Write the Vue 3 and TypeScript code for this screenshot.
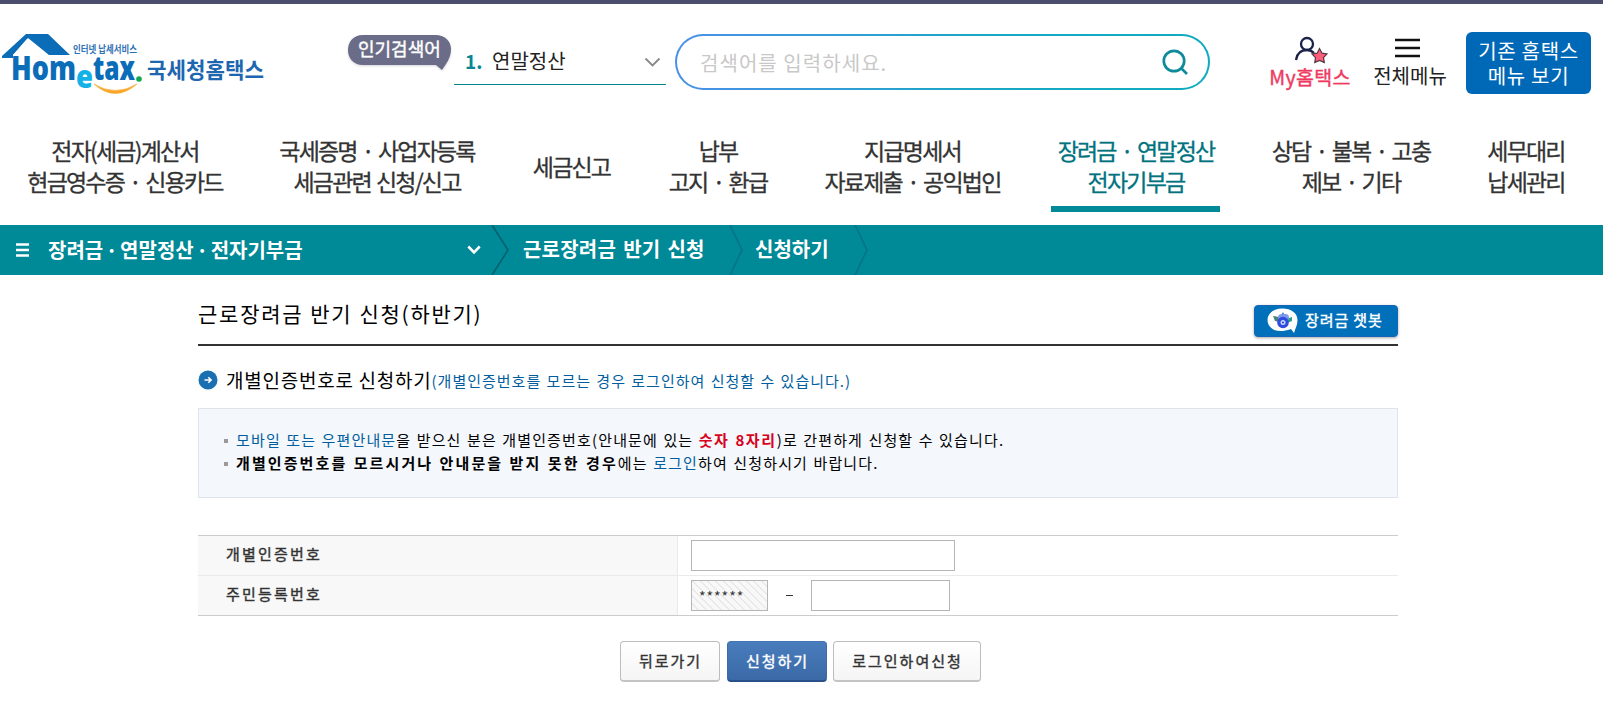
<script setup lang="ts">
import { ref } from 'vue'

interface MenuItem {
  lines: string[]
  active?: boolean
}

const menu: MenuItem[] = [
  { lines: ['전자(세금)계산서', '현금영수증 · 신용카드'] },
  { lines: ['국세증명 · 사업자등록', '세금관련 신청/신고'] },
  { lines: ['세금신고'] },
  { lines: ['납부', '고지 · 환급'] },
  { lines: ['지급명세서', '자료제출 · 공익법인'] },
  { lines: ['장려금 · 연말정산', '전자기부금'], active: true },
  { lines: ['상담 · 불복 · 고충', '제보 · 기타'] },
  { lines: ['세무대리', '납세관리'] },
]

const query = ref('')
const certNo = ref('')
const residentFront = ref('******')
const residentBack = ref('')
</script>

<template>
  <div class="page">
    <header class="header">
      <svg class="logo" width="270" height="66" viewBox="0 0 270 66">
        <path d="M26 1H48L70 22H49L28 5L13 22V25H2V23Z" fill="#0b6cb8" />
        <path d="M27 6L46 22H13Z" fill="#fff" />
        <text class="logo-small" x="73" y="20" textLength="64" lengthAdjust="spacingAndGlyphs">인터넷 납세서비스</text>
        <text class="logo-word" x="11" y="47" textLength="65" lengthAdjust="spacingAndGlyphs">Hom</text>
        <text class="logo-e" x="76" y="55" textLength="17" lengthAdjust="spacingAndGlyphs">e</text>
        <text class="logo-word" x="93" y="47" textLength="42" lengthAdjust="spacingAndGlyphs">tax</text>
        <circle cx="139" cy="46" r="2.8" fill="#12a84c" />
        <path d="M94 51Q115 70 137 51Q115 64 94 51Z" fill="#f9a72b" stroke="#f9a72b" stroke-width=".6" />
        <text class="logo-ko" x="147" y="45" textLength="117" lengthAdjust="spacingAndGlyphs">국세청홈택스</text>
      </svg>

      <div class="hot">
        <svg class="hot-shape" width="106" height="38" viewBox="0 0 106 38">
          <path d="M16 1H88C99 1 104 8 104 15C104 24 99 30 95 36L89 31H16C6 31 1 24 1 16S6 1 16 1Z" fill="#6b6d88" />
        </svg>
        <span class="hot-text">인기검색어</span>
      </div>

      <div class="keyword">
        <b>1.</b><span>연말정산</span>
        <svg width="17" height="11" viewBox="0 0 17 11"><path d="M1.5 1.5L8.5 8.5L15.5 1.5" fill="none" stroke="#888" stroke-width="1.8" /></svg>
      </div>

      <div class="search">
        <input v-model="query" placeholder="검색어를 입력하세요." />
        <svg width="26" height="27" viewBox="0 0 26 27" fill="none" stroke="#0e8b9a" stroke-width="2.7">
          <circle cx="12" cy="12" r="10.2" /><path d="M19 19L25 25" />
        </svg>
      </div>

      <a class="my">
        <svg width="34" height="28" viewBox="0 0 34 28">
          <g fill="none" stroke="#1b2147" stroke-width="2.3">
            <circle cx="13" cy="8" r="6" /><path d="M2 24C3 17 7 14 13 14C16 14 18 15 20 17" />
          </g>
          <path d="M25.5 12.5L28 17.2L33 18L29.5 21.7L30.3 26.5L25.5 24.5L20.8 26.5L21.5 21.7L18 18L23.2 17.2Z" fill="#ff5d7c" stroke="#543743" stroke-width="1.2" />
        </svg>
        <span>My홈택스</span>
      </a>
      <a class="all">
        <svg width="25" height="20" viewBox="0 0 25 20"><path d="M0 2H25M0 10H25M0 18H25" stroke="#111" stroke-width="2.6" /></svg>
        <span>전체메뉴</span>
      </a>
      <a class="old"><span>기존 홈택스</span><span>메뉴 보기</span></a>
    </header>

    <nav class="menu">
      <a v-for="item in menu" :key="item.lines[0]" :class="{ active: item.active }">
        <span v-for="line in item.lines" :key="line">{{ line }}</span>
      </a>
    </nav>

    <div class="crumbs">
      <svg class="bars" width="13" height="14" viewBox="0 0 13 14"><path d="M0 1.5H13M0 7H13M0 12.5H13" stroke="#fff" stroke-width="2.4" /></svg>
      <span class="crumb first">장려금 · 연말정산 · 전자기부금</span>
      <svg class="down" width="14" height="10" viewBox="0 0 14 10"><path d="M1.3 1.5L7 7.3L12.7 1.5" fill="none" stroke="#fff" stroke-width="2.6" /></svg>
      <svg class="sep dark" width="18" height="50" viewBox="0 0 18 50"><path d="M1 0L17 25L1 50" /></svg>
      <span class="crumb second">근로장려금 반기 신청</span>
      <svg class="sep" width="14" height="50" viewBox="0 0 14 50"><path d="M1 0L13 25L1 50" /></svg>
      <span class="crumb third">신청하기</span>
      <svg class="sep" width="14" height="50" viewBox="0 0 14 50"><path d="M1 0L13 25L1 50" /></svg>
    </div>

    <main class="content">
      <div class="title-row">
        <h1>근로장려금 반기 신청(하반기)</h1>
        <button class="chat">
          <svg width="32" height="26" viewBox="0 0 32 26">
            <path d="M15.500 .5C24 .5 30.500 5 30.500 12C30.500 17 28.500 20 27 25L24 21C8 27 .5 19 .5 12C.5 5 7 .5 15.500 .5Z" fill="#fff" />
            <path d="M6 8L12 9V14L8 13Z" fill="#4a8174" /><path d="M25 9L19 11L20 15L25 13Z" fill="#23a384" />
            <rect x="11" y="6" width="11" height="7" rx="3.500" fill="#7d9bea" />
            <circle cx="16" cy="14.500" r="5.800" fill="#304be0" /><circle cx="16" cy="14.500" r="2.500" fill="#c9d6ff" />
            <circle cx="16" cy="14.500" r="1.100" fill="#304be0" /><circle cx="16" cy="5.500" r="1" fill="#5277dd" />
          </svg>
          <span>장려금 챗봇</span>
        </button>
      </div>

      <h2>
        <svg width="20" height="20" viewBox="0 0 20 20">
          <circle cx="10" cy="10" r="9.500" fill="#1a6fb0" /><path d="M6.500 10H13M10.300 7.200L13.100 10L10.300 12.800" fill="none" stroke="#fff" stroke-width="1.600" />
        </svg>
        <span class="h2-main">개별인증번호로 신청하기</span><span class="h2-sub">(개별인증번호를 모르는 경우 로그인하여 신청할 수 있습니다.)</span>
      </h2>

      <ul class="notice">
        <li><em>모바일 또는 우편안내문</em>을 받으신 분은 개별인증번호(안내문에 있는 <strong class="red">숫자 8자리</strong>)로 간편하게 신청할 수 있습니다.</li>
        <li><strong>개별인증번호를 모르시거나 안내문을 받지 못한 경우</strong>에는 <em>로그인</em>하여 신청하시기 바랍니다.</li>
      </ul>

      <div class="form">
        <div class="row">
          <label>개별인증번호</label>
          <div class="cell"><input v-model="certNo" class="cert" /></div>
        </div>
        <div class="row">
          <label>주민등록번호</label>
          <div class="cell">
            <input v-model="residentFront" class="front" readonly /><span class="dash"></span><input v-model="residentBack" class="back" />
          </div>
        </div>
      </div>

      <div class="actions">
        <button>뒤로가기</button>
        <button class="primary">신청하기</button>
        <button class="wide">로그인하여신청</button>
      </div>
    </main>
  </div>
</template>

<style>
body {
  margin: 0;
  background: #fff;
}
</style>

<style scoped>
* {
  box-sizing: border-box;
}
.page {
  width: 1603px;
  height: 725px;
  overflow: hidden;
  border-top: 4px solid #4b4e6d;
  font-family: "Noto Sans CJK KR", "Noto Sans", sans-serif;
  color: #000;
  white-space: nowrap;
}
button,
input {
  font-family: inherit;
  margin: 0;
}
.header {
  display: flex;
  align-items: flex-start;
  height: 131px;
  padding-top: 28px;
}
.logo {
  flex: none;
  margin-top: 1px;
}
.logo text {
  font-weight: 700;
}
.logo-small {
  font-size: 10px;
  fill: #2f71b5;
}
.logo .logo-word {
  font-family: "Open Sans", sans-serif;
  font-size: 33px;
  font-weight: 800;
  fill: #0b6cb8;
}
.logo .logo-e {
  font-family: "Open Sans", sans-serif;
  font-size: 31px;
  font-weight: 800;
  fill: #12b1e8;
}
.logo-ko {
  font-size: 22px;
  fill: #1d66b0;
}
.hot {
  position: relative;
  width: 106px;
  height: 38px;
  margin: 2px 0 0 77px;
}
.hot-shape {
  display: block;
  filter: drop-shadow(0 1px 1px rgba(80, 80, 110, 0.25));
}
.hot-text {
  position: absolute;
  left: 11px;
  top: 2px;
  color: #fff;
  font-size: 18px;
  line-height: 25px;
  -webkit-text-stroke: 0.4px currentColor;
}
.keyword {
  display: flex;
  align-items: center;
  width: 212px;
  height: 53px;
  margin-left: 1px;
  padding: 4px 5px 0 11px;
  border-bottom: 1px solid #00868f;
  font-size: 20px;
  color: #222;
}
.keyword b {
  width: 27px;
  font-size: 19px;
  color: #078795;
}
.keyword svg {
  margin: 5px 0 0 auto;
}
.search {
  display: flex;
  align-items: center;
  justify-content: space-between;
  width: 535px;
  height: 56px;
  margin: 2px 0 0 9px;
  padding: 0 20px 0 23px;
  border: 2px solid transparent;
  border-radius: 28px;
  background: linear-gradient(#fff, #fff) padding-box, linear-gradient(90deg, #4a90e8, #17a8c4 60%, #10abc0) border-box;
}
.search input {
  width: 300px;
  padding: 0;
  border: 0;
  outline: 0;
  font-size: 20px;
  letter-spacing: 1.05px;
}
.search input::placeholder {
  color: #c8c8c8;
}
.my,
.all {
  display: flex;
  flex-direction: column;
  align-items: center;
  font-size: 20px;
  line-height: 26px;
}
.my {
  width: 84px;
  margin: 4px 0 0 58px;
  color: #ee3a61;
  font-size: 19.5px;
  letter-spacing: 0.3px;
  -webkit-text-stroke: 0.4px currentColor;
}
.my svg {
  margin-left: 2px;
}
.all {
  width: 76px;
  margin: 6px 0 0 20px;
  color: #222;
}
.all svg {
  margin: 0 5px 5px 0;
}
.old {
  display: flex;
  flex-direction: column;
  justify-content: center;
  align-items: center;
  width: 125px;
  height: 62px;
  margin-left: 18px;
  border-radius: 6px;
  background: #0069b7;
  color: #fff;
  font-size: 20px;
  line-height: 25px;
  letter-spacing: 0.7px;
}
.menu {
  display: grid;
  grid-template-columns: 252px 252px 137px 156px 233px 214px 216px 134px;
  height: 90px;
}
.menu a {
  position: relative;
  display: flex;
  flex-direction: column;
  justify-content: center;
  height: 62px;
  padding-right: 2px;
  text-align: center;
  font-size: 23px;
  line-height: 31px;
  letter-spacing: -1.8px;
  word-spacing: 1.7px;
  color: #333;
  -webkit-text-stroke: 0.3px currentColor;
}
.menu a.active {
  color: #00737f;
}
.menu a.active::after {
  content: "";
  position: absolute;
  left: 21px;
  top: 71px;
  width: 169px;
  height: 6px;
  background: #008996;
}
.crumbs {
  display: flex;
  align-items: center;
  height: 50px;
  padding-left: 16px;
  background: #008996;
  color: #fff;
}
.crumb {
  font-size: 20px;
  font-weight: 700;
  line-height: 50px;
}
.bars {
  margin-right: 19px;
}
.first {
  width: 419px;
  word-spacing: -2px;
}
.down {
  margin-right: 10px;
}
.sep path {
  fill: none;
  stroke: #057486;
  stroke-width: 1.6;
}
.sep.dark path {
  stroke: #05616e;
}
.second {
  width: 206px;
  margin: -3px 0 0 14px;
  letter-spacing: 0.2px;
  word-spacing: 2.4px;
}
.third {
  width: 99px;
  margin: -3px 0 0 12px;
}
.content {
  width: 1200px;
  margin-left: 198px;
}
.title-row {
  display: flex;
  justify-content: space-between;
  height: 71px;
  padding-top: 26px;
  border-bottom: 2px solid #333;
}
h1 {
  margin: -1px 0 0;
  font-size: 21px;
  font-weight: 400;
  line-height: 27px;
  letter-spacing: 1.75px;
  word-spacing: 0.5px;
}
.chat {
  display: flex;
  align-items: center;
  width: 144px;
  height: 32px;
  margin-top: 4px;
  padding: 0 0 0 12px;
  border: 1px solid #1565b8;
  border-radius: 4px;
  background: #0070ba;
  box-shadow: 0 1px 3px rgba(0, 0, 0, 0.35);
  color: #fff;
  font-size: 15px;
  letter-spacing: 0.9px;
  -webkit-text-stroke: 0.4px currentColor;
}
.chat span {
  margin: -3px 0 0 6px;
}
h2 {
  display: flex;
  align-items: center;
  height: 28px;
  margin: 20px 0 14px;
  font-weight: 400;
}
h2 svg {
  margin-top: -1px;
}
.h2-main {
  margin: -2px 0 0 8px;
  font-size: 19px;
  letter-spacing: 0.75px;
}
.h2-sub {
  font-size: 15px;
  letter-spacing: 1px;
  word-spacing: 1px;
  color: #005e9e;
}
.notice {
  height: 90px;
  margin: 0;
  padding: 20px 0 0 25px;
  border: 1px solid #dde4ec;
  background: #f4f7fc;
  list-style: none;
  font-size: 15px;
  line-height: 21px;
  letter-spacing: 1.15px;
  word-spacing: 0.9px;
}
.notice li {
  display: flex;
  align-items: center;
  height: 23px;
  padding-bottom: 2px;
  white-space: pre;
}
.notice li::before {
  content: "";
  width: 4px;
  height: 4px;
  margin: 2px 8px 0 0;
  background: #999;
}
.notice em {
  font-style: normal;
  color: #005e9e;
}
.notice strong {
  letter-spacing: 2.1px;
}
.notice .red {
  letter-spacing: 1.6px;
  color: #d9001b;
}
.form {
  margin-top: 37px;
  border-top: 1px solid #ccc;
  border-bottom: 1px solid #ccc;
}
.row {
  display: flex;
  height: 39px;
}
.row + .row {
  height: 40px;
  border-top: 1px solid #eaeaea;
}
.row label {
  width: 480px;
  padding-left: 28px;
  border-right: 1px solid #eaeaea;
  background: #f8f8f8;
  color: #333;
  font-size: 15px;
  line-height: 36px;
  letter-spacing: 2.2px;
  -webkit-text-stroke: 0.4px currentColor;
}
.cell {
  display: flex;
  align-items: center;
  padding-left: 13px;
}
.cell input {
  height: 31px;
  padding: 0 7px;
  border: 1px solid #b5b5b5;
  outline: 0;
  background: #fff;
}
.cell .cert {
  width: 264px;
}
.cell .front {
  width: 77px;
  background: repeating-linear-gradient(45deg, #f8f8f8 0 4px, #e9e9e9 4px 5.4px);
  color: #333;
  font-size: 14px;
  letter-spacing: 1px;
}
.cell .back {
  width: 139px;
}
.dash {
  width: 7px;
  height: 1px;
  margin: 0 18px;
  background: #333;
}
.actions {
  display: flex;
  gap: 7px;
  margin: 25px 0 0 422px;
}
.actions button {
  width: 100px;
  height: 41px;
  padding: 0 0 2px;
  border: 1px solid #bdbdbd;
  border-bottom: 2px solid #c4c4c4;
  border-radius: 4px;
  background: linear-gradient(#fff, #f5f5f5);
  color: #333;
  font-size: 15px;
  letter-spacing: 2px;
  text-indent: 1px;
  -webkit-text-stroke: 0.4px currentColor;
}
.actions .primary {
  border-color: #4275b3 #3c6ca8 #28508a;
  background: linear-gradient(#4a7dbd, #3a69a6);
  color: #fff;
}
.actions .wide {
  width: 148px;
  margin-left: -1px;
}
</style>
